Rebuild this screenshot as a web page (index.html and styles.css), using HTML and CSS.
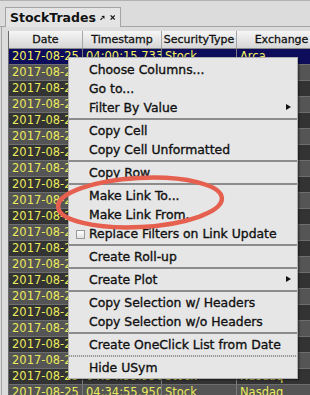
FILE: index.html
```html
<!DOCTYPE html>
<html lang="en">
<head>
    <meta charset="UTF-8">
    <title>StockTrades</title>
    <link rel="stylesheet" href="styles.css">
</head>
<body>
<div class="app">
    <!-- Tab strip -->
    <div class="tabbar">
        <div class="tab">
            <span class="tab-title">StockTrades</span>
            <svg class="tab-icon" width="8" height="8" viewBox="0 0 8 8">
                <path d="M0.8 7.2 L4.2 3.8" stroke="#111" stroke-width="2" fill="none"/>
                <polygon points="2.2,0.6 7.6,0.4 7.4,5.8" fill="#111"/>
            </svg>
            <svg class="tab-icon close" width="9" height="9" viewBox="0 0 9 9">
                <path d="M1 1 L8 8 M8 1 L1 8" stroke="#111" stroke-width="2.1" fill="none"/>
            </svg>
        </div>
    </div>

    <!-- Table -->
    <div class="panel">
        <div class="grid">
            <div class="row head">
                <div class="cell">Date</div>
                <div class="cell">Timestamp</div>
                <div class="cell">SecurityType</div>
                <div class="cell">Exchange</div>
            </div>
            <div class="row selected"><div class="cell">2017-08-25</div><div class="cell">04:00:15.733</div><div class="cell">Stock</div><div class="cell">Arca</div></div>
            <div class="row"><div class="cell">2017-08-25</div><div class="cell">04:00:16.102</div><div class="cell">Stock</div><div class="cell">Arca</div></div>
            <div class="row"><div class="cell">2017-08-25</div><div class="cell">04:00:17.540</div><div class="cell">Stock</div><div class="cell">Nasdaq</div></div>
            <div class="row"><div class="cell">2017-08-25</div><div class="cell">04:00:19.008</div><div class="cell">Stock</div><div class="cell">Arca</div></div>
            <div class="row"><div class="cell">2017-08-25</div><div class="cell">04:01:02.316</div><div class="cell">Stock</div><div class="cell">Nasdaq</div></div>
            <div class="row"><div class="cell">2017-08-25</div><div class="cell">04:01:44.870</div><div class="cell">Stock</div><div class="cell">Arca</div></div>
            <div class="row"><div class="cell">2017-08-25</div><div class="cell">04:02:10.455</div><div class="cell">Stock</div><div class="cell">Nasdaq</div></div>
            <div class="row"><div class="cell">2017-08-25</div><div class="cell">04:03:27.091</div><div class="cell">Stock</div><div class="cell">Arca</div></div>
            <div class="row"><div class="cell">2017-08-25</div><div class="cell">04:05:33.612</div><div class="cell">Stock</div><div class="cell">Nasdaq</div></div>
            <div class="row"><div class="cell">2017-08-25</div><div class="cell">04:07:18.240</div><div class="cell">Stock</div><div class="cell">Arca</div></div>
            <div class="row"><div class="cell">2017-08-25</div><div class="cell">04:09:51.377</div><div class="cell">Stock</div><div class="cell">Nasdaq</div></div>
            <div class="row"><div class="cell">2017-08-25</div><div class="cell">04:12:06.918</div><div class="cell">Stock</div><div class="cell">Arca</div></div>
            <div class="row"><div class="cell">2017-08-25</div><div class="cell">04:14:40.503</div><div class="cell">Stock</div><div class="cell">Nasdaq</div></div>
            <div class="row"><div class="cell">2017-08-25</div><div class="cell">04:17:22.164</div><div class="cell">Stock</div><div class="cell">Arca</div></div>
            <div class="row"><div class="cell">2017-08-25</div><div class="cell">04:19:58.730</div><div class="cell">Stock</div><div class="cell">Nasdaq</div></div>
            <div class="row"><div class="cell">2017-08-25</div><div class="cell">04:22:13.285</div><div class="cell">Stock</div><div class="cell">Arca</div></div>
            <div class="row"><div class="cell">2017-08-25</div><div class="cell">04:25:09.642</div><div class="cell">Stock</div><div class="cell">Nasdaq</div></div>
            <div class="row"><div class="cell">2017-08-25</div><div class="cell">04:27:47.019</div><div class="cell">Stock</div><div class="cell">Arca</div></div>
            <div class="row"><div class="cell">2017-08-25</div><div class="cell">04:30:31.556</div><div class="cell">Stock</div><div class="cell">Nasdaq</div></div>
            <div class="row"><div class="cell">2017-08-25</div><div class="cell">04:32:12.808</div><div class="cell">Stock</div><div class="cell">Arca</div></div>
            <div class="row"><div class="cell">2017-08-25</div><div class="cell">04:34:55.950</div><div class="cell">Stock</div><div class="cell">Nasdaq</div></div>
            <div class="row"><div class="cell">2017-08-25</div><div class="cell">04:34:55.950</div><div class="cell">Stock</div><div class="cell">Nasdaq</div></div>
        </div>
    </div>

    <!-- Context menu -->
    <div class="menu">
        <div class="item">Choose Columns...</div>
        <div class="item">Go to...</div>
        <div class="item sub">Filter By Value</div>
        <div class="sep"></div>
        <div class="item">Copy Cell</div>
        <div class="item">Copy Cell Unformatted</div>
        <div class="sep"></div>
        <div class="item">Copy Row</div>
        <div class="sep"></div>
        <div class="item">Make Link To...</div>
        <div class="item">Make Link From...</div>
        <div class="item check"><span class="box"></span>Replace Filters on Link Update</div>
        <div class="sep"></div>
        <div class="item">Create Roll-up</div>
        <div class="sep"></div>
        <div class="item sub">Create Plot</div>
        <div class="sep"></div>
        <div class="item">Copy Selection w/ Headers</div>
        <div class="item">Copy Selection w/o Headers</div>
        <div class="sep"></div>
        <div class="item">Create OneClick List from Date</div>
        <div class="sep dotted"></div>
        <div class="item">Hide USym</div>
    </div>

    <!-- Annotation ring -->
    <svg class="ring" width="310" height="395" viewBox="0 0 310 395">
        <ellipse cx="140" cy="202.5" rx="82" ry="24.5" transform="rotate(-3 140 202.5)"
                 fill="none" stroke="#e6604f" stroke-width="4.5"/>
    </svg>
</div>
</body>
</html>
```

FILE: styles.css
```css
body {
    margin: 0;
    background: #dcdcdc;
    font-family: "DejaVu Sans", sans-serif;
    overflow: hidden;
}
.app {
    position: relative;
    width: 310px;
    height: 395px;
    overflow: hidden;
}
.tabbar {
    height: 27px;
    box-sizing: border-box;
    border-top: 1px solid #b2b2b2;
    border-bottom: 1px solid #a4a4a4;
    padding-left: 5px;
    display: flex;
    align-items: flex-end;
}
.tab {
    height: 20px;
    width: 116px;
    box-sizing: border-box;
    margin-bottom: -1px;
    border: 1px solid #a4a4a4;
    border-bottom: none;
    background: #e4e4e4;
    padding: 0 5px 0 4px;
    display: flex;
    align-items: center;
}
.tab-title {
    flex: 1;
    font-size: 12.5px;
    font-weight: bold;
    color: #111;
}
.tab-icon {
    margin-left: 4px;
}
.tab-icon.close {
    margin-left: 5px;
}
.panel {
    margin-left: 1px;
    border-left: 1px solid #a4a4a4;
    padding: 4px 0 0 6px;
}
.grid {
    border-left: 1px solid #6a6a6a;
}
.row {
    display: grid;
    grid-template-columns: 74px 79px 75px 90px;
    height: 16px;
    box-sizing: border-box;
    border-bottom: 1px solid #6e6e6e;
    background: #333333;
}
.row:nth-child(odd) {
    background: #555555;
}
.row .cell {
    font-size: 11.5px;
    line-height: 15px;
    color: #eaea5c;
    padding-left: 3px;
    border-right: 1px solid #7c7c7c;
    white-space: nowrap;
    overflow: hidden;
}
.row.selected {
    background: #0d0d5c;
}
.row.selected .cell {
    color: #f4f45a;
}
.row.head {
    height: 18px;
    background: linear-gradient(#f6f6f6, #d6d6d6);
    border-bottom: 1px solid #8a8a8a;
}
.row.head .cell {
    color: #111;
    font-size: 11px;
    line-height: 17px;
    text-align: center;
    padding-left: 0;
    border-right: 1px solid #a6a6a6;
    -webkit-text-stroke: 0.3px #111;
}

/* popup menu */
.menu {
    position: absolute;
    left: 68px;
    top: 57px;
    width: 230px;
    box-sizing: border-box;
    background: #e6e6e6;
    border: 1px solid #b0b0b0;
    padding: 2px 0 1px;
    box-shadow: 1px 1px 2px rgba(0, 0, 0, 0.55);
}
.item {
    position: relative;
    height: 19px;
    line-height: 19px;
    padding-left: 20px;
    font-size: 12.4px;
    color: #111;
    -webkit-text-stroke: 0.35px #111;
    white-space: nowrap;
}
.item.sub::after {
    content: "";
    position: absolute;
    right: 6px;
    top: 6px;
    border-left: 5px solid #111;
    border-top: 3.5px solid transparent;
    border-bottom: 3.5px solid transparent;
}
.item .box {
    position: absolute;
    left: 7px;
    top: 6px;
    width: 7px;
    height: 7px;
    border: 1px solid #9a9a9a;
    background: linear-gradient(#ffffff, #e2e2e2);
}
.sep {
    height: 2px;
    margin: 1px 0;
    background: #8c8c8c;
}
.sep.dotted {
    background: repeating-linear-gradient(90deg, #9c9c9c 0 1px, #d8d8d8 1px 2px);
}
.ring {
    position: absolute;
    left: 0;
    top: 0;
    pointer-events: none;
}
```
